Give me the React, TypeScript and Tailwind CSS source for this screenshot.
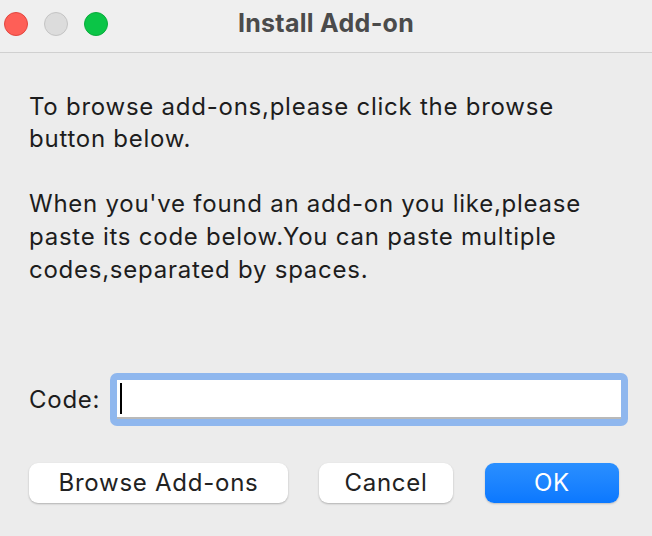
import React from 'react';

const font = { fontFamily: 'Inter, "Noto Sans", sans-serif' };

export default function App() {
  return (
    <div className="w-[652px] h-[536px] bg-[#ececec] flex flex-col text-[#1d1d1d]" style={font}>
      {/* title bar */}
      <div className="relative h-[53px] bg-[#efefef] border-b border-[#d0d0d0] flex items-start justify-center shrink-0">
        <div className="absolute left-[4px] top-[12px] flex gap-[16px]">
          <span className="w-[24px] h-[24px] rounded-full bg-[#fe5f57] border border-[#e2463f]" />
          <span className="w-[24px] h-[24px] rounded-full bg-[#dcdcdc] border border-[#c4c4c4]" />
          <span className="w-[24px] h-[24px] rounded-full bg-[#0bc547] border border-[#0aab3c]" />
        </div>
        <span className="mt-[7px] text-[25px] leading-[32px] font-bold text-[#4b4b4b] tracking-[0.3px]">Install Add-on</span>
      </div>

      {/* body */}
      <div className="flex-1 flex flex-col pl-[29px] pt-[38px] text-[24px] tracking-[0.75px]">
        <p className="leading-[32px] whitespace-nowrap">
          To browse add-ons,please click the browse
          <br />
          button below.
        </p>
        <p className="leading-[33px] whitespace-nowrap mt-[32px]">
          When you've found an add-on you like,please
          <br />
          paste its code below.You can paste multiple
          <br />
          codes,separated by spaces.
        </p>

        <div className="flex items-center mt-[87px]">
          <label className="w-[81px] shrink-0">Code:</label>
          <div className="w-[518px] h-[53px] shrink-0 bg-[#8fb7ee] rounded-[7px] p-[7px]">
            <div className="h-full bg-white border-b-[2px] border-[#b9b9b9] flex items-center pl-[3px]">
              <span className="w-[2px] h-[31px] bg-black" />
            </div>
          </div>
        </div>

        <div className="flex items-center mt-[37px]">
          <button className="w-[259px] h-[40px] bg-white rounded-[9px] shadow-[0_1px_2px_rgba(0,0,0,0.25)] text-[#222]">
            Browse Add-ons
          </button>
          <button className="ml-[31px] w-[134px] h-[40px] bg-white rounded-[9px] shadow-[0_1px_2px_rgba(0,0,0,0.25)] text-[#222]">
            Cancel
          </button>
          <button className="ml-[32px] w-[134px] h-[40px] rounded-[9px] bg-gradient-to-b from-[#2a8fff] to-[#0a78ff] shadow-[0_1px_2px_rgba(0,0,0,0.2)] text-white">
            OK
          </button>
        </div>
      </div>
    </div>
  );
}
